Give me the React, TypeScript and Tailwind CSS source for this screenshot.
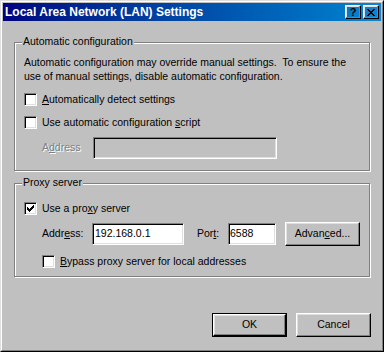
import type { ReactNode } from 'react';

const raised =
  'border border-t-white border-l-white border-r-black border-b-black shadow-[inset_-1px_-1px_0_#808080,inset_1px_1px_0_#dfdfdf]';
const sunken =
  'border border-t-[#808080] border-l-[#808080] border-r-white border-b-white shadow-[inset_1px_1px_0_#000,inset_-1px_-1px_0_#dfdfdf]';

const CHECK = ['......X', '.....XX', 'X...XXX', 'XX.XXX.', 'XXXXX..', '.XXX...', '..X....'];

function CheckBox({ checked }: { checked?: boolean }) {
  return (
    <div className={`w-[13px] h-[13px] shrink-0 bg-white flex items-center justify-center ${sunken}`}>
      {checked && (
        <svg width="7" height="7" viewBox="0 0 7 7" shapeRendering="crispEdges">
          {CHECK.map((row, y) =>
            row.split('').map((c, x) => (c === 'X' ? <rect key={`${x}-${y}`} x={x} y={y} width="1" height="1" fill="#000" /> : null))
          )}
        </svg>
      )}
    </div>
  );
}

function CheckRow({ checked, children, className = '' }: { checked?: boolean; children: ReactNode; className?: string }) {
  return (
    <div className={`flex items-center gap-[5px] h-[13px] leading-[13px] ${className}`}>
      <CheckBox checked={checked} />
      <span className="whitespace-nowrap">{children}</span>
    </div>
  );
}

function GroupBox({ label, className = '', children }: { label: string; className?: string; children: ReactNode }) {
  return (
    <div className={`relative border border-[#808080] shadow-[inset_1px_1px_0_#fff,1px_1px_0_#fff] ${className}`}>
      <span className="absolute left-[7px] top-[-8px] px-[1px] bg-[#c0c0c0] leading-[13px] whitespace-nowrap">{label}</span>
      {children}
    </div>
  );
}

function Button({ children, isDefault, className = '' }: { children: ReactNode; isDefault?: boolean; className?: string }) {
  if (isDefault) {
    return (
      <div className={`w-[75px] h-[24px] border border-black flex ${className}`}>
        <div className={`flex-1 flex items-center justify-center ${raised}`}>{children}</div>
      </div>
    );
  }
  return <div className={`w-[75px] h-[24px] flex items-center justify-center ${raised} ${className}`}>{children}</div>;
}

export default function App() {
  return (
    <div className="w-[384px] h-[352px] font-['Liberation_Sans',Arial,sans-serif] text-[10.5px] text-black border border-t-[#dfdfdf] border-l-[#dfdfdf] border-r-black border-b-black">
      <div className="h-full border border-t-white border-l-white border-r-[#808080] border-b-[#808080] bg-[#c0c0c0] p-px flex flex-col">
        {/* title bar */}
        <div className="h-[18px] shrink-0 flex items-center pl-[2px] pr-[2px] bg-linear-to-r from-[#000080] to-[#1084d0]">
          <span className="flex-1 text-white font-bold text-[12px] leading-[18px] whitespace-nowrap">
            Local Area Network (LAN) Settings
          </span>
          <div className="flex gap-[2px]">
            <div className={`w-[16px] h-[14px] flex items-center justify-center ${raised}`}>
              <span className="font-bold text-[11px] leading-[11px] mt-[1px]">?</span>
            </div>
            <div className={`w-[16px] h-[14px] flex items-center justify-center ${raised}`}>
              <svg width="8" height="7" viewBox="0 0 8 7" shapeRendering="crispEdges">
                <path
                  d="M0 0h2v1h-2zM6 0h2v1h-2zM1 1h2v1h-2zM5 1h2v1h-2zM2 2h4v1h-4zM3 3h2v1h-2zM2 4h4v1h-4zM1 5h2v1h-2zM5 5h2v1h-2zM0 6h2v1h-2zM6 6h2v1h-2z"
                  fill="#000"
                />
              </svg>
            </div>
          </div>
        </div>

        {/* body */}
        <div className="flex-1 flex flex-col px-[11px] pt-[21px]">
          <GroupBox label="Automatic configuration" className="h-[129px] pt-[12px] pl-[9px]">
            <p className="leading-[14px] whitespace-nowrap">
              Automatic configuration may override manual settings.{'\u00a0'} To ensure the
              <br />
              use of manual settings, disable automatic configuration.
            </p>
            <CheckRow className="mt-[10px]">
              <u>A</u>utomatically detect settings
            </CheckRow>
            <CheckRow className="mt-[10px]">
              Use automatic configuration <u>s</u>cript
            </CheckRow>
            <div className="mt-[8px] flex items-center ml-[18px]">
              <span className="w-[51px] text-[#808080] [text-shadow:1px_1px_0_#fff]">
                A<u>d</u>dress
              </span>
              <div className={`w-[184px] h-[22px] bg-[#c0c0c0] ${sunken}`} />
            </div>
          </GroupBox>

          <GroupBox label="Proxy server" className="mt-[12px] h-[94px] pt-[18px] pl-[9px]">
            <CheckRow checked>
              Use a pro<u>x</u>y server
            </CheckRow>
            <div className="mt-[7px] flex items-center h-[24px] ml-[18px]">
              <span className="w-[50px]">
                Addr<u>e</u>ss:
              </span>
              <div className={`w-[92px] h-[22px] bg-white pl-[2px] leading-[18px] ${sunken}`}>192.168.0.1</div>
              <span className="ml-[13px] w-[31px]">
                Por<u>t</u>:
              </span>
              <div className={`w-[48px] h-[22px] bg-white pl-[1px] leading-[18px] ${sunken}`}>6588</div>
              <Button className="ml-[9px] h-[24px]">
                <span>
                  Advan<u>c</u>ed...
                </span>
              </Button>
            </div>
            <CheckRow className="mt-[9px] ml-[18px]">
              <u>B</u>ypass proxy server for local addresses
            </CheckRow>
          </GroupBox>

          <div className="mt-[36px] flex justify-end gap-[9px] -mr-px">
            <Button isDefault>OK</Button>
            <Button>Cancel</Button>
          </div>
        </div>
      </div>
    </div>
  );
}
